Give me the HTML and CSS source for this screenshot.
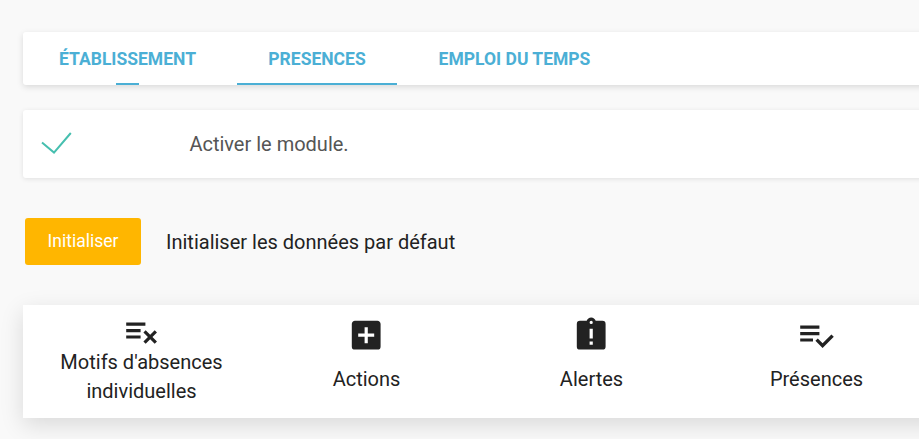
FILE: index.html
```html
<!DOCTYPE html>
<html lang="fr">
<head>
<meta charset="utf-8">
<title>Presences</title>
<link rel="stylesheet" href="styles.css">
</head>
<body>
<nav class="tabs">
  <a class="tab tab-school"><span>ÉTABLISSEMENT</span></a>
  <a class="tab tab-presences"><span>PRESENCES</span></a>
  <a class="tab tab-timetable"><span>EMPLOI DU TEMPS</span></a>
</nav>
<section class="module">
  <svg class="check" viewBox="0 0 32 24"><path d="M1 10.6L13 20.6L29.8 1"/></svg>
  <span class="module-label">Activer le module.</span>
</section>
<section class="init">
  <button class="init-button">Initialiser</button>
  <span class="init-label">Initialiser les données par défaut</span>
</section>
<section class="cards">
  <div class="card card-tall">
    <svg class="icon" viewBox="0 0 24 24"><path d="M2 6V8H14V6H2M2 10V12H11V10H2M14.17 10.76L12.76 12.17L15.59 15L12.76 17.83L14.17 19.24L17 16.41L19.83 19.24L21.24 17.83L18.41 15L21.24 12.17L19.83 10.76L17 13.59L14.17 10.76M2 14V16H11V14H2Z"/></svg>
    <span class="card-label">Motifs d'absences<br>individuelles</span>
  </div>
  <div class="card">
    <svg class="icon" viewBox="0 0 24 24"><path d="M17 13H13V17H11V13H7V11H11V7H13V11H17M19 3H5C3.89 3 3 3.89 3 5V19A2 2 0 0 0 5 21H19A2 2 0 0 0 21 19V5C21 3.89 20.1 3 19 3Z"/></svg>
    <span class="card-label">Actions</span>
  </div>
  <div class="card">
    <svg class="icon" viewBox="0 0 24 24"><path d="M12 5A1 1 0 0 1 11 4A1 1 0 0 1 12 3A1 1 0 0 1 13 4A1 1 0 0 1 12 5M13 14H11V8H13M13 18H11V16H13M19 3H14.82C14.4 1.84 13.3 1 12 1C10.7 1 9.6 1.84 9.18 3H5A2 2 0 0 0 3 5V19A2 2 0 0 0 5 21H19A2 2 0 0 0 21 19V5A2 2 0 0 0 19 3Z"/></svg>
    <span class="card-label">Alertes</span>
  </div>
  <div class="card">
    <svg class="icon" viewBox="0 0 24 24"><path d="M14 10H2V12H14V10M14 6H2V8H14V6M2 16H10V14H2V16M21.5 11.5L23 13L16 20L11.5 15.5L13 14L16 17L21.5 11.5Z"/></svg>
    <span class="card-label">Présences</span>
  </div>
</section>
</body>
</html>
```
FILE: styles.css
```css
* { box-sizing: border-box; }
body {
  margin: 0;
  padding: 32px 0 0 23px;
  height: 439px;
  overflow: hidden;
  background: #f9f9f9;
  color: #222;
  font-family: Roboto, sans-serif;
  font-size: 20px;
}
.tabs, .module {
  width: 940px;
  background: #fff;
  border-radius: 3px;
  box-shadow: 0 2px 6px rgba(0, 0, 0, .13);
}
.module { box-shadow: 0 1px 5px rgba(0, 0, 0, .1); }
.tabs {
  display: flex;
  height: 53px;
  color: #4bafd5;
  font-size: 17.5px;
  font-weight: 700;
}
.tab {
  display: flex;
  flex-direction: column;
  align-items: center;
  padding-top: 16px;
  line-height: 22px;
  white-space: nowrap;
}
.tab::after {
  content: "";
  height: 2px;
  margin-top: auto;
  background: #4bafd5;
}
.tab-school { width: 209px; margin-right: 5px; }
.tab-school::after { width: 23px; }
.tab-presences { width: 160px; }
.tab-presences::after { width: 100%; }
.tab-timetable { width: 235px; }
.module {
  display: flex;
  align-items: center;
  height: 68px;
  margin-top: 25px;
  padding-left: 18px;
  color: #555;
}
.check {
  width: 32px;
  height: 24px;
  margin-right: 116.4px;
  fill: none;
  stroke: #46bfaf;
  stroke-width: 2;
}
.init {
  display: flex;
  align-items: center;
  height: 47px;
  margin: 40px 0 0 2px;
}
.init-button {
  width: 116px;
  height: 47px;
  padding: 0 0 2px;
  border: 0;
  border-radius: 3px;
  background: #ffb600;
  color: #fff;
  font: 17.5px Roboto, sans-serif;
}
.init-label { margin-left: 25px; }
.cards {
  display: flex;
  width: 940px;
  height: 113px;
  margin-top: 40px;
  padding: 10.8px 0 0 6px;
  background: #fff;
  box-shadow: 0 7px 22px rgba(0, 0, 0, .13);
}
.card {
  display: flex;
  flex: 0 0 225px;
  flex-direction: column;
  align-items: center;
  text-align: center;
  line-height: 29px;
}
.icon {
  flex: none;
  width: 38.4px;
  height: 38.4px;
  margin-bottom: 11px;
  fill: #222;
}
.card-tall .icon { margin: -3px -1px -3px 0; }
```
